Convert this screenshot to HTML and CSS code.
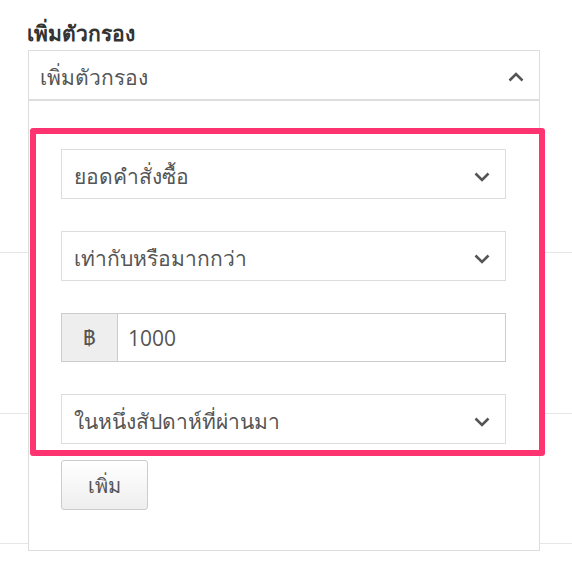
FILE: index.html
```html
<!DOCTYPE html>
<html lang="th">
<head>
    <meta charset="UTF-8">
    <meta name="viewport" content="width=device-width, initial-scale=1.0">
    <title>เพิ่มตัวกรอง</title>
    <link rel="stylesheet" href="styles.css">
</head>
<body>
    <div class="rows">
        <div class="row row-1"></div>
        <div class="row row-2"></div>
        <div class="row row-3"></div>
    </div>

    <div class="filter">
        <h3 class="filter-title">เพิ่มตัวกรอง</h3>
        <div class="dropdown">
            <div class="dropdown-head">
                <span>เพิ่มตัวกรอง</span>
                <svg class="chevron" width="16" height="10" viewBox="0 0 16 10"><path d="M1.5 8.5 L8 2 L14.5 8.5" /></svg>
            </div>
            <div class="dropdown-body">
                <div class="select">
                    <span>ยอดคำสั่งซื้อ</span>
                    <svg class="chevron" width="16" height="10" viewBox="0 0 16 10"><path d="M1.5 1.5 L8 8 L14.5 1.5" /></svg>
                </div>
                <div class="select">
                    <span>เท่ากับหรือมากกว่า</span>
                    <svg class="chevron" width="16" height="10" viewBox="0 0 16 10"><path d="M1.5 1.5 L8 8 L14.5 1.5" /></svg>
                </div>
                <div class="input-group">
                    <span class="addon">฿</span>
                    <input type="text" value="1000">
                </div>
                <div class="select">
                    <span>ในหนึ่งสัปดาห์ที่ผ่านมา</span>
                    <svg class="chevron" width="16" height="10" viewBox="0 0 16 10"><path d="M1.5 1.5 L8 8 L14.5 1.5" /></svg>
                </div>
                <button class="btn">เพิ่ม</button>
            </div>
        </div>
        <div class="highlight"></div>
    </div>
</body>
</html>
```

FILE: styles.css
```css
body, html {
    margin: 0;
    padding: 0;
    background-color: #fff;
    font-family: "Open Sans", "Noto Sans", sans-serif;
    color: #555;
}

.rows {
    width: 100%;
}

.row {
    border-bottom: 1px solid #e6e6e6;
}

.row-1 {
    height: 252px;
}

.row-2 {
    height: 160px;
}

.row-3 {
    height: 129px;
}

/* filter dropdown lies over the table rows */
.filter {
    position: absolute;
    top: 0;
    left: 28px;
    width: 512px;
}

.filter-title {
    margin: 0;
    height: 50px;
    padding-top: 20px;
    box-sizing: border-box;
    font-size: 21px;
    line-height: 26px;
    font-weight: bold;
    color: #333;
    margin-left: -1px;
}

.dropdown {
    border: 1px solid #ddd;
    background-color: #fff;
}

.dropdown-head {
    display: flex;
    align-items: center;
    justify-content: space-between;
    height: 50px;
    padding: 4px 15px 0 11px;
    box-sizing: border-box;
    border-bottom: 2px solid #ddd;
    font-size: 21px;
}

.chevron {
    fill: none;
    stroke: #555;
    stroke-width: 2.6;
}

.dropdown-body {
    display: flex;
    flex-direction: column;
    align-items: flex-start;
    gap: 32px;
    padding: 48px 33px 40px 32px;
}

.select {
    display: flex;
    align-items: center;
    justify-content: space-between;
    width: 100%;
    height: 50px;
    box-sizing: border-box;
    border: 1px solid #ddd;
    padding: 5px 15px 0 12px;
    font-size: 21px;
}

.input-group {
    display: flex;
    width: 100%;
    height: 49px;
    box-sizing: border-box;
    border: 1px solid #ccc;
}

.addon {
    display: flex;
    align-items: center;
    justify-content: center;
    width: 55px;
    background-color: #eee;
    border-right: 1px solid #ccc;
    font-size: 21px;
}

.input-group input {
    flex: 1;
    min-width: 0;
    border: none;
    outline: none;
    padding: 0 0 0 10px;
    font-family: "Open Sans", "Noto Sans", sans-serif;
    font-size: 21px;
    color: #555;
}

.btn {
    margin-top: -16px;
    width: 87px;
    height: 50px;
    padding-top: 3px;
    border: 1px solid #ccc;
    border-radius: 3px;
    background: linear-gradient(#fff, #eee);
    font-family: "Open Sans", "Noto Sans", sans-serif;
    font-size: 20px;
    color: #555;
}

.highlight {
    position: absolute;
    top: 128px;
    left: 2px;
    width: 515px;
    height: 328px;
    box-sizing: border-box;
    border: 6px solid #ff3370;
    border-radius: 3px;
    pointer-events: none;
}
```
